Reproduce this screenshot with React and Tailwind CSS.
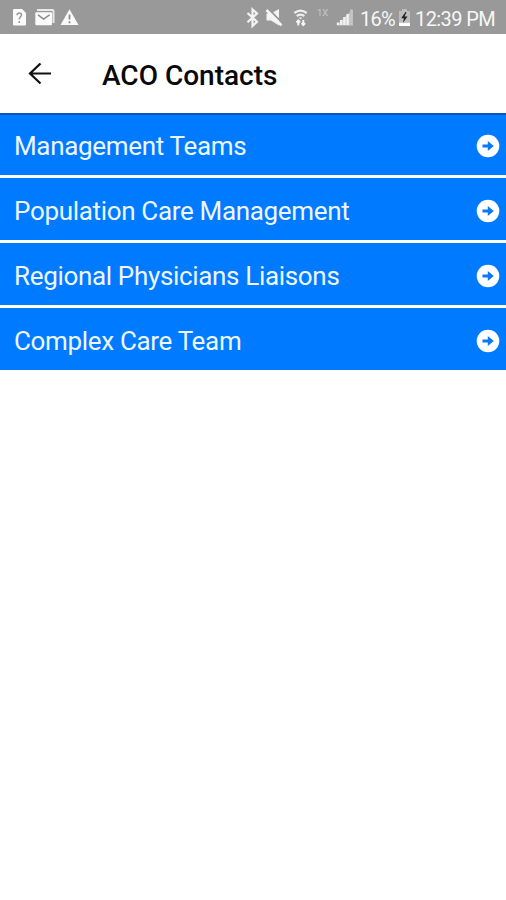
const contacts = [
  'Management Teams',
  'Population Care Management',
  'Regional Physicians Liaisons',
  'Complex Care Team',
];

function LeftStatusIcons() {
  return (
    <svg className="block h-[34px] w-[90px] shrink-0" viewBox="0 0 90 34" fill="none">
      <path d="M14 9h8l4 4v11.500q0 1-1 1H14q-1 0-1-1V10q0-1 1-1z" fill="#fafafa" />
      <path d="M17 15.200q.2-2.200 2.300-2.200 2.200 0 2.200 2c0 1.700-2.200 2-2.200 4.400M19.300 21v2" stroke="#999" strokeWidth="1.500" />
      <path d="M37 10h15.500q1 0 1 1V23" stroke="#e9e9e9" strokeWidth="2" />
      <rect x="35.300" y="12.200" width="16.700" height="13" rx="1" fill="#fafafa" />
      <path d="M38 14.800l5.600 4.300 6-4.300" stroke="#8c8c8c" strokeWidth="1.600" />
      <path d="M69.500 9.200L78.500 25H60.500z" fill="#fafafa" />
      <path d="M69.500 14.500v5M69.500 21.200v2" stroke="#8c8c8c" strokeWidth="1.800" />
    </svg>
  );
}

function RightStatusIcons() {
  return (
    <svg className="block h-[34px] w-[120px] shrink-0" viewBox="240 0 120 34" fill="none">
      <path d="M247.500 13l9.500 8.700-4.500 4.300V9.500L257 13.500l-9.500 8.700" stroke="#f3f3f3" strokeWidth="2.200" />
      <path d="M266.500 13.500h4.500l8-4.500v16.500l-8-5h-4.500z" fill="#f3f3f3" />
      <path d="M268.600 9l14 14.500" stroke="#999" strokeWidth="1.800" />
      <path d="M266.500 10l15 15.300" stroke="#f5f5f5" strokeWidth="2.600" />
      <path d="M294.300 13q6.200-4.600 12.400 0M296.700 16q3.800-2.800 7.600 0" stroke="#efefef" strokeWidth="2.200" />
      <path d="M298.600 17.500h3.800l-1.900 2z" fill="#eee" />
      <path d="M298.300 25.500v-5M296.500 22.500l1.800-2 1.800 2M303.300 20v5M301.500 23.200l1.800 2 1.800-2" stroke="#f6f6f6" strokeWidth="1.900" />
      <path d="M336.500 25.500L350 12v13.500z" fill="#c6c6c6" />
      <path d="M338 25v-2.500M341.200 25v-5M344.400 25v-8M347.600 25v-11" stroke="#f2f2f2" strokeWidth="2.400" />
      <path d="M351.500 25.500v-16" stroke="#c6c6c6" strokeWidth="2.800" />
      <text x="317" y="16" fill="#c8c8c8" fontFamily="Roboto, sans-serif" fontSize="9.500">1X</text>
    </svg>
  );
}

function BatteryIcon() {
  return (
    <svg className="block h-[34px] w-[14px] shrink-0" viewBox="397 0 14 34">
      <path d="M402 9h5v2h3v15h-11V11h3z" fill="#bdbdbd" />
      <path d="M399 22.800h11V26h-11z" fill="#fff" />
      <path d="M405.500 12l-4.300 6.200h2.700l-.9 4.600 4.500-6.400h-2.900l1.900-4.400z" fill="#222" />
    </svg>
  );
}

function CircleArrow() {
  return (
    <svg className="block size-6 shrink-0" viewBox="0 0 24 24">
      <circle cx="12" cy="12" r="11.300" fill="#fff" />
      <path d="M6.500 10.600h5.300V7.100l6 4.900-6 4.900v-3.500H6.500z" fill="#0879fa" />
    </svg>
  );
}

export default function App() {
  return (
    <div className="flex h-[900px] w-[506px] flex-col overflow-hidden bg-white font-['Roboto',sans-serif]">
      <div className="flex h-[34px] shrink-0 items-center bg-[#999999] text-[20px] leading-[34px] whitespace-nowrap text-[#f7f7f7]">
        <LeftStatusIcons />
        <div className="w-[150px]" />
        <RightStatusIcons />
        <span className="w-[37px] pt-[3px] tracking-[-0.8px]">16%</span>
        <BatteryIcon />
        <span className="pt-[3px] pl-[4px] tracking-[-0.6px]">12:39 PM</span>
      </div>
      <header className="flex h-[79px] shrink-0 items-center">
        <svg className="mt-[3px] ml-7 block size-6 shrink-0" viewBox="0 0 24 24" fill="none">
          <path d="M23 10.500H2M12.500.5l-10.500 10 10.500 10" stroke="#111" strokeWidth="2.200" />
        </svg>
        <h1 className="ml-[50px] pt-[4px] text-[28px] leading-8 font-medium whitespace-nowrap text-[#090909]">ACO Contacts</h1>
      </header>
      <ul className="flex flex-col gap-[3px]">
        {contacts.map((label) => (
          <li
            key={label}
            className="flex h-[62px] items-center justify-between bg-[#007aff] pt-[3px] pr-[6px] pl-[14px] text-[26px] whitespace-nowrap text-[#edf6ff] first:border-t-2 first:border-[#0755bd] first:pt-px"
          >
            <span className="leading-8 tracking-[-0.33px]">{label}</span>
            <CircleArrow />
          </li>
        ))}
      </ul>
    </div>
  );
}
